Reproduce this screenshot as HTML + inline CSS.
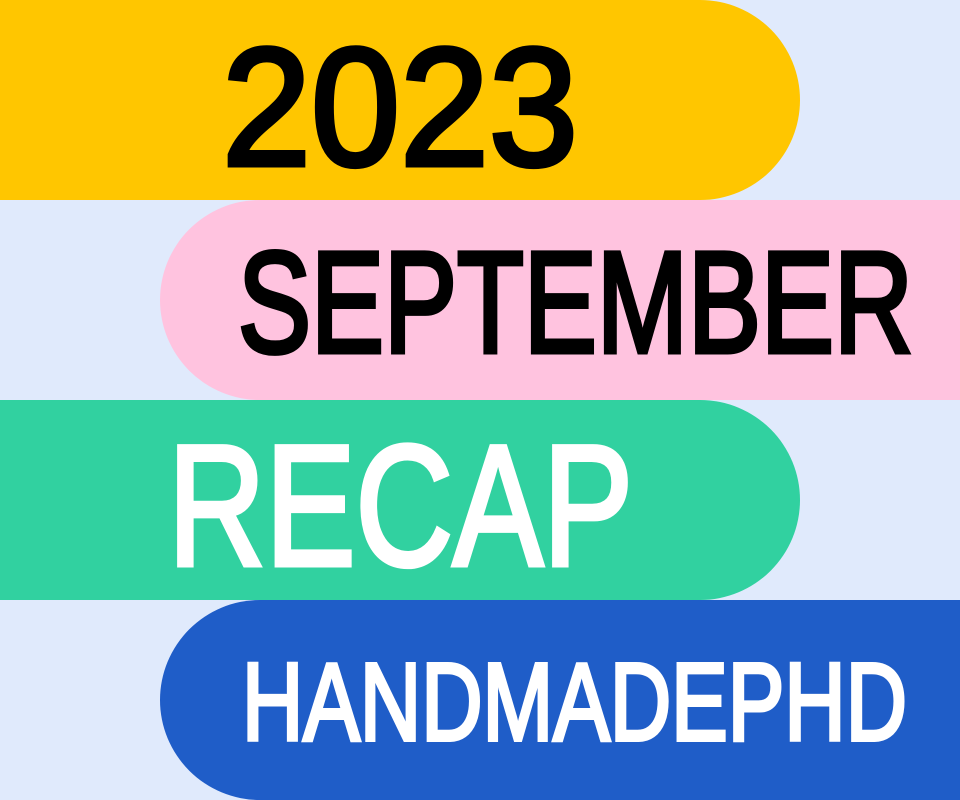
<!DOCTYPE html>
<html><head><style>
html,body{margin:0;padding:0;background:#e0eafc;}
svg{display:block}
text{font-family:"Liberation Sans",sans-serif;}
</style></head><body>
<svg width="960" height="800" viewBox="0 0 960 800" xmlns="http://www.w3.org/2000/svg">
<rect width="960" height="800" fill="#e0eafc"/>
<path d="M0 0H700A100 100 0 0 1 700 200H0Z" fill="#ffc600"/>
<path d="M960 200H260A100 100 0 0 0 260 400H960Z" fill="#ffc3df"/>
<path d="M0 400H700A100 100 0 0 1 700 600H0Z" fill="#31d1a0"/>
<path d="M960 600H260A100 100 0 0 0 260 800H960Z" fill="#1f5dc8"/>
<text x="222" y="165" font-size="168" fill="#000" stroke="#000" stroke-width="5" textLength="356" lengthAdjust="spacingAndGlyphs">2023</text>
<text x="238" y="352" font-size="144" fill="#000" stroke="#000" stroke-width="5" textLength="675" lengthAdjust="spacingAndGlyphs">SEPTEMBER</text>
<text x="168" y="565" font-size="172" fill="#fff" stroke="#fff" stroke-width="5" textLength="465" lengthAdjust="spacingAndGlyphs">RECAP</text>
<text x="242" y="740" font-size="110" fill="#fff" stroke="#fff" stroke-width="4" textLength="665" lengthAdjust="spacingAndGlyphs">HANDMADEPHD</text>
</svg>
</body></html>
